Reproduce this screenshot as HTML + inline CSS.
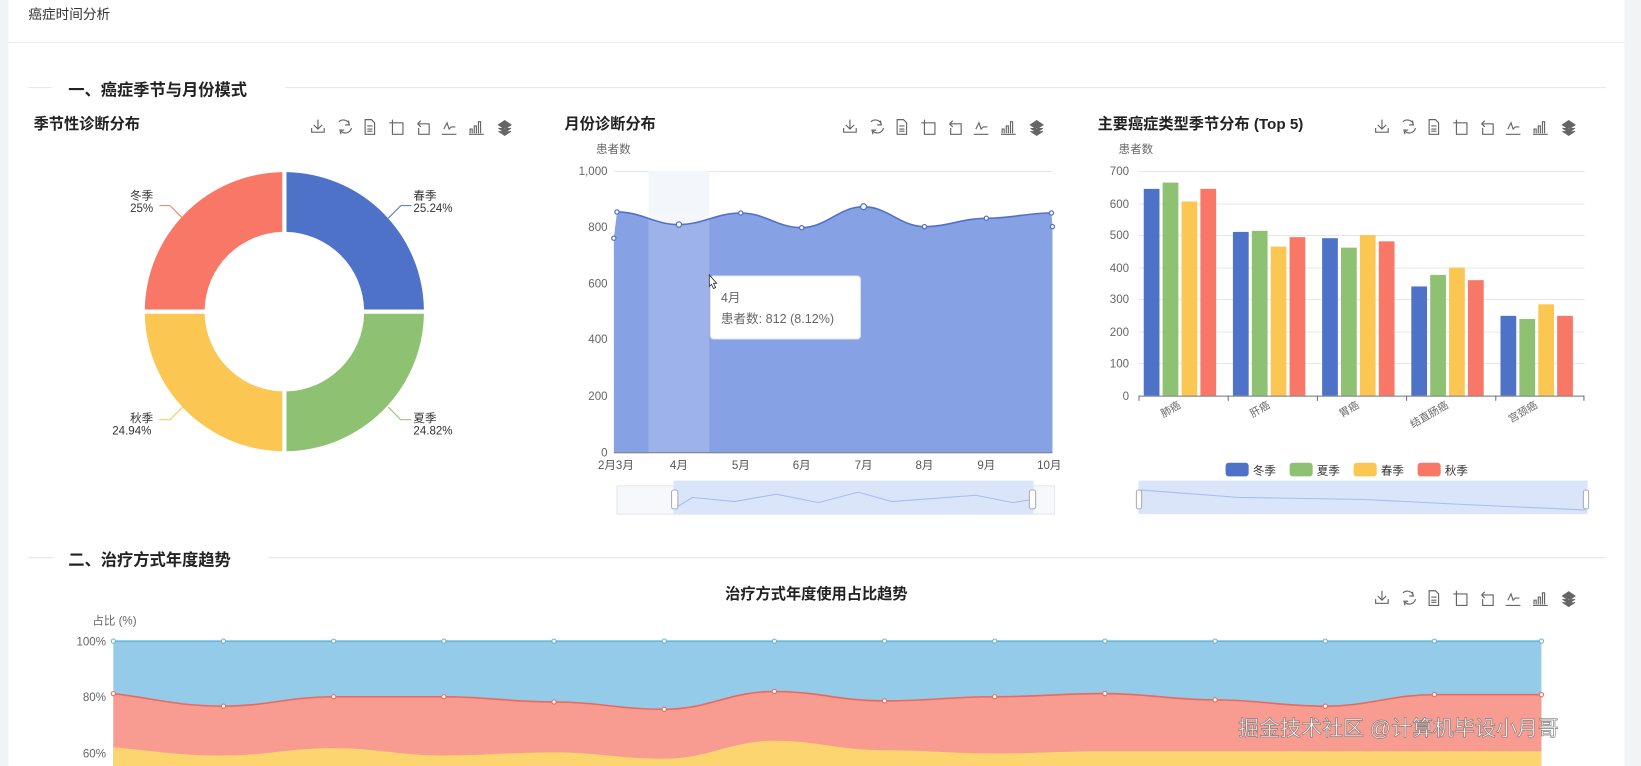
<!DOCTYPE html>
<html><head><meta charset="utf-8"><style>
html,body{margin:0;padding:0;background:#f2f3f5;overflow:hidden;width:1641px;height:766px}
#w{width:1564px;height:732px;transform:scale(1.0493);transform-origin:0 0;position:relative}
svg{display:block;font-family:"Liberation Sans","Noto Sans CJK SC",sans-serif}
</style></head><body><div id="w">
<svg width="1564" height="732" viewBox="0 0 1564 732">
<rect x="8" y="0" width="1540" height="732" fill="#fff"/>
<line x1="8" y1="40.5" x2="1548" y2="40.5" stroke="#eceef1"/>
<text x="27" y="18" font-size="13" fill="#333">癌症时间分析</text>
<line x1="27" y1="83.5" x2="50" y2="83.5" stroke="#e3e5e8"/><line x1="272" y1="83.5" x2="1530" y2="83.5" stroke="#e3e5e8"/>
<text x="65" y="91" font-size="15.5" font-weight="bold" fill="#222">一、癌症季节与月份模式</text>
<line x1="27" y1="531.5" x2="50" y2="531.5" stroke="#e3e5e8"/><line x1="256" y1="531.5" x2="1530" y2="531.5" stroke="#e3e5e8"/>
<text x="65" y="539" font-size="15.5" font-weight="bold" fill="#222">二、治疗方式年度趋势</text>
<defs>
<g id="tb" fill="none" stroke="#666" stroke-width="1.1">
<path d="M0,0v9M-4,5l4,4 4,-4M-6,8v4h12v-4"/>
<path d="M20,2a6,6 0 0 1 10,3M32,8a6,6 0 0 1-10,3M29,1l1,4-4,0M22,14l-1-4 4,0"/>
<path d="M45,0h6l3,3v11h-9zM47,6h5M47,9h5M47,11h5"/>
<path d="M71,0v3h-3M71,3h10v11h-10z"/>
<path d="M95,4l3-3M95,4l3,3M95,4h11v10h-10v-6"/>
<path d="M118,14h14M120,9l3-6 2,6 2-2h4"/>
<path d="M144,14h14M145,13v-4h2v4M149,13v-7h2v7M153,13v-11h2v11"/>
</g>
<g id="st"><path d="M172,5l6-4 6,4-6,4z M172,8l6,4 6-4M172,11l6,4 6-4" fill="#666" stroke="#666" stroke-width="1"/></g>
</defs>
<g transform="translate(303,114)"><use href="#tb"/><use href="#st"/></g>
<g transform="translate(810,114)"><use href="#tb"/><use href="#st"/></g>
<g transform="translate(1317,114)"><use href="#tb"/><use href="#st"/></g>
<g transform="translate(1317,563)"><use href="#tb"/><use href="#st"/></g>
<text x="32" y="123" font-size="14.5" font-weight="bold" fill="#222">季节性诊断分布</text>
<path d="M273,164A133,133 0 0 1 404,295L347,295A76,76 0 0 0 273,221Z" fill="#4f72c9"/>
<path d="M404,299A133,133 0 0 1 273,430L273,373A76,76 0 0 0 347,299Z" fill="#8ec272"/>
<path d="M269,430A133,133 0 0 1 138,299L195,299A76,76 0 0 0 269,373Z" fill="#fcc652"/>
<path d="M138,295A133,133 0 0 1 269,164L269,221A76,76 0 0 0 195,295Z" fill="#f87766"/>
<g font-size="11" fill="#333">
<text x="124" y="190">冬季</text><text x="124" y="202">25%</text>
<text x="394" y="190">春季</text><text x="394" y="202">25.24%</text>
<text x="124" y="402">秋季</text><text x="107" y="414">24.94%</text>
<text x="394" y="402">夏季</text><text x="394" y="414">24.82%</text>
</g>
<g fill="none" stroke-width="1"><path d="M152,196h10l12,12" stroke="#f87766"/><path d="M392,196h-10l-12,12" stroke="#4f72c9"/><path d="M152,400h10l12,-12" stroke="#fcc652"/><path d="M392,400h-10l-12,-12" stroke="#8ec272"/></g>
<text x="538" y="123" font-size="14.5" font-weight="bold" fill="#222">月份诊断分布</text>
<text x="568" y="146" font-size="11" fill="#666">患者数</text>
<g stroke="#e6e8ec"><line x1="585" y1="163.5" x2="1003" y2="163.5"/><line x1="585" y1="216.5" x2="1003" y2="216.5"/><line x1="585" y1="270.5" x2="1003" y2="270.5"/><line x1="585" y1="323.5" x2="1003" y2="323.5"/><line x1="585" y1="377.5" x2="1003" y2="377.5"/></g>
<g font-size="11" fill="#666" text-anchor="end"><text x="579" y="167">1,000</text><text x="579" y="220">800</text><text x="579" y="274">600</text><text x="579" y="327">400</text><text x="579" y="381">200</text><text x="579" y="435">0</text></g>
<rect x="618" y="163" width="58" height="268" fill="#f3f6fb"/>
<path d="M585,227L588,202C612,202 623,214 647,214C670,214 683,203 706,203C729,203 741,217 764,217C787,217 800,197 823,197C846,197 858,216 881,216C904,216 917,208 940,208C965,208 978,203 1002,203L1003,216L1003,431L585,431Z" fill="#87a1e5"/>
<rect x="618" y="203" width="58" height="228" fill="#ffffff" opacity="0.18"/>
<path d="M588,202C612,202 623,214 647,214C670,214 683,203 706,203C729,203 741,217 764,217C787,217 800,197 823,197C846,197 858,216 881,216C904,216 917,208 940,208C965,208 978,203 1002,203" fill="none" stroke="#5470c6" stroke-width="1.5"/>
<g fill="#fff" stroke="#5470c6" stroke-width="1.2"><circle cx="585" cy="227" r="2"/><circle cx="588" cy="202" r="2"/><circle cx="647" cy="214" r="2.5"/><circle cx="706" cy="203" r="2"/><circle cx="764" cy="217" r="2"/><circle cx="823" cy="197" r="2.8"/><circle cx="881" cy="216" r="2"/><circle cx="940" cy="208" r="2"/><circle cx="1002" cy="203" r="2"/><circle cx="1003" cy="216" r="2"/></g>
<line x1="585" y1="431.5" x2="1003" y2="431.5" stroke="#6e7079"/>
<g font-size="11" fill="#555" text-anchor="middle"><text x="587" y="447">2月3月</text><text x="647" y="447">4月</text><text x="706" y="447">5月</text><text x="764" y="447">6月</text><text x="823" y="447">7月</text><text x="881" y="447">8月</text><text x="940" y="447">9月</text><text x="1000" y="447">10月</text></g>
<rect x="677" y="263" width="143" height="60" rx="3" fill="#fff" stroke="#e5e5e5"/>
<text x="687" y="288" font-size="12" fill="#666">4月</text>
<text x="687" y="308" font-size="12" fill="#666">患者数: 812 (8.12%)</text>
<path d="M676,262v11l2-2 2,4 2-1-2-4h3z" fill="#fff" stroke="#333" stroke-width="0.8"/>
<rect x="588" y="463" width="417" height="27" fill="#f7f8fb" stroke="#e3e6ec"/>
<rect x="642" y="458" width="343" height="32" fill="#dbe5fa"/>
<path d="M642,485L660,474 700,478 740,471 780,479 818,469 850,478 890,475 930,472 965,479 984,476" fill="none" stroke="#a8bde9"/>
<rect x="640" y="467" width="6" height="18" rx="2" fill="#fff" stroke="#aab"/><rect x="981" y="467" width="6" height="18" rx="2" fill="#fff" stroke="#aab"/>
<text x="1046" y="123" font-size="14.5" font-weight="bold" fill="#222">主要癌症类型季节分布 (Top 5)</text>
<text x="1066" y="146" font-size="11" fill="#666">患者数</text>
<g stroke="#e6e8ec"><line x1="1085" y1="163.5" x2="1510" y2="163.5"/><line x1="1085" y1="194.5" x2="1510" y2="194.5"/><line x1="1085" y1="224.5" x2="1510" y2="224.5"/><line x1="1085" y1="255.5" x2="1510" y2="255.5"/><line x1="1085" y1="285.5" x2="1510" y2="285.5"/><line x1="1085" y1="316.5" x2="1510" y2="316.5"/><line x1="1085" y1="346.5" x2="1510" y2="346.5"/></g>
<g font-size="11" fill="#666" text-anchor="end"><text x="1076" y="167">700</text><text x="1076" y="198">600</text><text x="1076" y="228">500</text><text x="1076" y="259">400</text><text x="1076" y="289">300</text><text x="1076" y="320">200</text><text x="1076" y="350">100</text><text x="1076" y="381">0</text></g>
<g>
<rect x="1090" y="180" width="15" height="197" fill="#4f72c9"/><rect x="1108" y="174" width="15" height="203" fill="#8ec272"/><rect x="1126" y="192" width="15" height="185" fill="#fcc652"/><rect x="1144" y="180" width="15" height="197" fill="#f87766"/>
<rect x="1175" y="221" width="15" height="156" fill="#4f72c9"/><rect x="1193" y="220" width="15" height="157" fill="#8ec272"/><rect x="1211" y="235" width="15" height="142" fill="#fcc652"/><rect x="1229" y="226" width="15" height="151" fill="#f87766"/>
<rect x="1260" y="227" width="15" height="150" fill="#4f72c9"/><rect x="1278" y="236" width="15" height="141" fill="#8ec272"/><rect x="1296" y="224" width="15" height="153" fill="#fcc652"/><rect x="1314" y="230" width="15" height="147" fill="#f87766"/>
<rect x="1345" y="273" width="15" height="104" fill="#4f72c9"/><rect x="1363" y="262" width="15" height="115" fill="#8ec272"/><rect x="1381" y="255" width="15" height="122" fill="#fcc652"/><rect x="1399" y="267" width="15" height="110" fill="#f87766"/>
<rect x="1430" y="301" width="15" height="76" fill="#4f72c9"/><rect x="1448" y="304" width="15" height="73" fill="#8ec272"/><rect x="1466" y="290" width="15" height="87" fill="#fcc652"/><rect x="1484" y="301" width="15" height="76" fill="#f87766"/>
</g>
<line x1="1085" y1="377.5" x2="1510" y2="377.5" stroke="#6e7079"/>
<g stroke="#6e7079"><line x1="1085.5" y1="377" x2="1085.5" y2="382"/><line x1="1170.5" y1="377" x2="1170.5" y2="382"/><line x1="1255.5" y1="377" x2="1255.5" y2="382"/><line x1="1340.5" y1="377" x2="1340.5" y2="382"/><line x1="1425.5" y1="377" x2="1425.5" y2="382"/><line x1="1509.5" y1="377" x2="1509.5" y2="382"/></g>
<g font-size="10" fill="#666" text-anchor="end"><text transform="translate(1126,388) rotate(-30)">肺癌</text><text transform="translate(1211,388) rotate(-30)">肝癌</text><text transform="translate(1296,388) rotate(-30)">胃癌</text><text transform="translate(1381,388) rotate(-30)">结直肠癌</text><text transform="translate(1466,388) rotate(-30)">宫颈癌</text></g>
<g font-size="11" fill="#333"><rect x="1168" y="441" width="22" height="13" rx="3" fill="#4f72c9"/><text x="1194" y="452">冬季</text><rect x="1229" y="441" width="22" height="13" rx="3" fill="#8ec272"/><text x="1255" y="452">夏季</text><rect x="1290" y="441" width="22" height="13" rx="3" fill="#fcc652"/><text x="1316" y="452">春季</text><rect x="1351" y="441" width="22" height="13" rx="3" fill="#f87766"/><text x="1377" y="452">秋季</text></g>
<rect x="1085" y="458" width="428" height="32" fill="#dbe5fa"/>
<path d="M1087,467L1180,474 1300,476 1400,481 1511,486" fill="none" stroke="#a8bde9"/>
<rect x="1083" y="467" width="5" height="18" rx="2" fill="#fff" stroke="#aab"/><rect x="1509" y="467" width="5" height="18" rx="2" fill="#fff" stroke="#aab"/>
<text x="778" y="571" font-size="14.5" font-weight="bold" fill="#222" text-anchor="middle">治疗方式年度使用占比趋势</text>
<text x="88" y="595" font-size="11" fill="#666">占比 (%)</text>
<g font-size="11" fill="#666" text-anchor="end"><text x="101" y="615">100%</text><text x="101" y="668">80%</text><text x="101" y="722">60%</text></g>
<rect x="108" y="611" width="1361" height="121" fill="#94cbe8"/>
<path d="M108,661C150,666 170,673 213,673C255,673 275,664 318,664C360,664 380,664 423,664C465,664 485,669 528,669C570,669 590,676 633,676C675,676 695,659 738,659C780,659 800,668 843,668C885,668 905,664 948,664C990,664 1010,661 1053,661C1095,661 1115,667 1158,667C1200,667 1220,673 1263,673C1305,673 1325,662 1367,662C1410,662 1430,662 1469,662L1469,732L108,732Z" fill="#f89b90"/>
<path d="M108,661C150,666 170,673 213,673C255,673 275,664 318,664C360,664 380,664 423,664C465,664 485,669 528,669C570,669 590,676 633,676C675,676 695,659 738,659C780,659 800,668 843,668C885,668 905,664 948,664C990,664 1010,661 1053,661C1095,661 1115,667 1158,667C1200,667 1220,673 1263,673C1305,673 1325,662 1367,662C1410,662 1430,662 1469,662" fill="none" stroke="#e86a5c" stroke-width="1.5"/>
<path d="M108,712C150,716 170,720 213,720C255,720 275,713 318,713C360,713 380,720 423,720C465,720 485,717 528,717C570,717 590,723 633,723C675,723 695,706 738,706C780,706 800,715 843,715C885,715 905,718 948,718C990,718 1010,716 1053,716L1469,716L1469,732L108,732Z" fill="#fcd470"/>
<line x1="108" y1="611" x2="1469" y2="611" stroke="#5fb3d6" stroke-width="1.5"/>
<g fill="#fff" stroke="#5fb3d6" stroke-width="1"><circle cx="108" cy="611" r="2"/><circle cx="213" cy="611" r="2"/><circle cx="318" cy="611" r="2"/><circle cx="423" cy="611" r="2"/><circle cx="528" cy="611" r="2"/><circle cx="633" cy="611" r="2"/><circle cx="738" cy="611" r="2"/><circle cx="843" cy="611" r="2"/><circle cx="948" cy="611" r="2"/><circle cx="1053" cy="611" r="2"/><circle cx="1158" cy="611" r="2"/><circle cx="1263" cy="611" r="2"/><circle cx="1367" cy="611" r="2"/><circle cx="1469" cy="611" r="2"/></g>
<g fill="#fff" stroke="#e86a5c" stroke-width="1"><circle cx="108" cy="661" r="2"/><circle cx="213" cy="673" r="2"/><circle cx="318" cy="664" r="2"/><circle cx="423" cy="664" r="2"/><circle cx="528" cy="669" r="2"/><circle cx="633" cy="676" r="2"/><circle cx="738" cy="659" r="2"/><circle cx="843" cy="668" r="2"/><circle cx="948" cy="664" r="2"/><circle cx="1053" cy="661" r="2"/><circle cx="1158" cy="667" r="2"/><circle cx="1263" cy="673" r="2"/><circle cx="1367" cy="662" r="2"/><circle cx="1469" cy="662" r="2"/></g>
<text x="1180" y="701" font-size="20" fill="#fff" stroke="#777" stroke-width="0.6" opacity="0.95">掘金技术社区 @计算机毕设小月哥</text>
</svg></div></body></html>
